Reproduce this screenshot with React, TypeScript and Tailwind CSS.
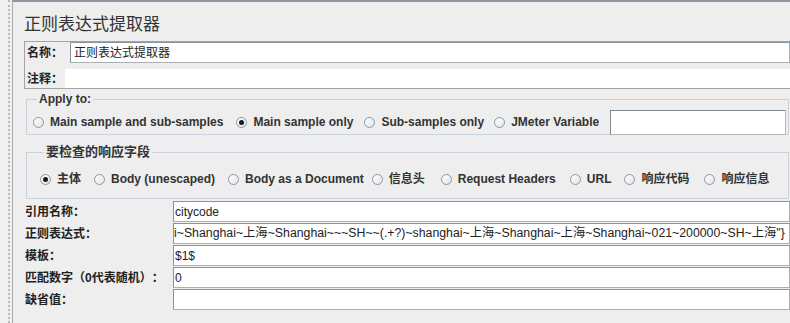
import React from "react";

const FONT = "font-['Liberation_Sans','Noto_Sans_CJK_SC',sans-serif]";

function Radio({ checked, label }: { checked?: boolean; label: string }) {
  return (
    <div className="flex items-center gap-[6px] shrink-0">
      <span className="w-[11px] h-[11px] rounded-full border border-[#8a96a2] bg-[linear-gradient(135deg,#ffffff_0%,#dfe4e9_100%)] flex items-center justify-center shrink-0">
        {checked && <span className="w-[5px] h-[5px] rounded-full bg-[#1a1a1a]" />}
      </span>
      <span className="text-[12px] font-bold text-[#333] leading-none whitespace-nowrap">{label}</span>
    </div>
  );
}

function Field({ children, cls }: { children?: React.ReactNode; cls?: string }) {
  return (
    <div className="flex-1 min-w-0 h-[21px] bg-white border border-[#8a949c] border-b-[#a9b1b7] border-r-[#a9b1b7] overflow-hidden flex items-center whitespace-nowrap text-[12px] text-[#222] px-[1px]">
      <span className={"shrink-0 " + (cls || "")}>{children}</span>
    </div>
  );
}

export default function App() {
  const regex =
    'i~Shanghai~上海~Shanghai~~~SH~~(.+?)~shanghai~上海~Shanghai~上海~Shanghai~021~200000~SH~上海"}';
  return (
    <div className={"w-[790px] h-[323px] bg-[#eeeeee] flex overflow-hidden [text-spacing-trim:space-all] " + FONT}>
      <div className="w-[12px] shrink-0 h-full bg-[#f0f0f0] flex">
        <div className="w-[8px]" />
        <div className="h-full border-l-2 border-dotted border-[#b8b8b8]" />
      </div>
      <div className="flex-1 min-w-0 h-full border-l border-[#a6abb0] border-t-2 border-t-[#8d97a1] flex flex-col">
        <div className="h-[39px] shrink-0 pl-[11px] pt-[13px] text-[17px] leading-[20px] text-[#333]">正则表达式提取器</div>

        <div className="ml-[11px] h-[48px] shrink-0 border border-[#a3a3a3] border-r-0 flex flex-col">
          <div className="h-[21px] flex items-center">
            <span className="w-[45px] pl-[2px] text-[12px] font-bold text-[#222]">名称：</span>
            <Field>
              <span className="pl-[2px]">正则表达式提取器</span>
            </Field>
          </div>
          <div className="h-[6px]" />
          <div className="h-[19px] flex items-center">
            <span className="w-[40px] pl-[2px] text-[12px] font-bold text-[#222]">注释：</span>
            <div className="flex-1 h-full bg-white" />
          </div>
        </div>

        <fieldset className="ml-[13px] mr-[1px] mt-[3px] h-[43px] shrink-0 border border-[#c6d2de] pl-[6px] pr-[2px] pb-0 min-w-0">
          <legend className="ml-[4px] px-[2px] text-[12px] font-bold text-[#333] leading-[14px]">Apply to:</legend>
          <div className="flex items-center h-[26px] mt-[3px]">
            <Radio label="Main sample and sub-samples" />
            <div className="w-[13px]" />
            <Radio checked label="Main sample only" />
            <div className="w-[11px]" />
            <Radio label="Sub-samples only" />
            <div className="w-[10px]" />
            <Radio label="JMeter Variable" />
            <div className="w-[11px]" />
            <div className="flex-1 h-[25px] bg-white border border-[#7e8a94] border-b-[#b0b8be] border-r-[#b0b8be]" />
          </div>
        </fieldset>

        <fieldset className="ml-[13px] mr-[1px] mt-[10px] h-[54px] shrink-0 border border-[#c6d2de] px-[13px] min-w-0">
          <legend className="ml-[4px] px-[2px] text-[13px] font-bold text-[#333] leading-[14px]">要检查的响应字段</legend>
          <div className="flex items-center h-[14px] mt-[13px]">
            <Radio checked label="主体" />
            <div className="w-[13px]" />
            <Radio label="Body (unescaped)" />
            <div className="w-[13px]" />
            <Radio label="Body as a Document" />
            <div className="w-[8px]" />
            <Radio label="信息头" />
            <div className="w-[16px]" />
            <Radio label="Request Headers" />
            <div className="w-[14px]" />
            <Radio label="URL" />
            <div className="w-[13px]" />
            <Radio label="响应代码" />
            <div className="w-[15px]" />
            <Radio label="响应信息" />
          </div>
        </fieldset>

        <div className="mt-[2px] ml-[12px] flex flex-col gap-[1px]">
          {[
            { label: "引用名称：", value: "citycode" },
            { label: "正则表达式：", value: regex, cls: "text-[12.3px] -ml-[1px]" },
            { label: "模板：", value: "$1$" },
            { label: "匹配数字（0代表随机）：", value: "0" },
            { label: "缺省值：", value: "" },
          ].map((r, i) => (
            <div key={i} className="h-[21px] flex items-center">
              <span className="w-[148px] shrink-0 text-[12px] font-bold text-[#222] whitespace-nowrap">{r.label}</span>
              <Field cls={r.cls}>{r.value}</Field>
            </div>
          ))}
        </div>
      </div>
    </div>
  );
}
